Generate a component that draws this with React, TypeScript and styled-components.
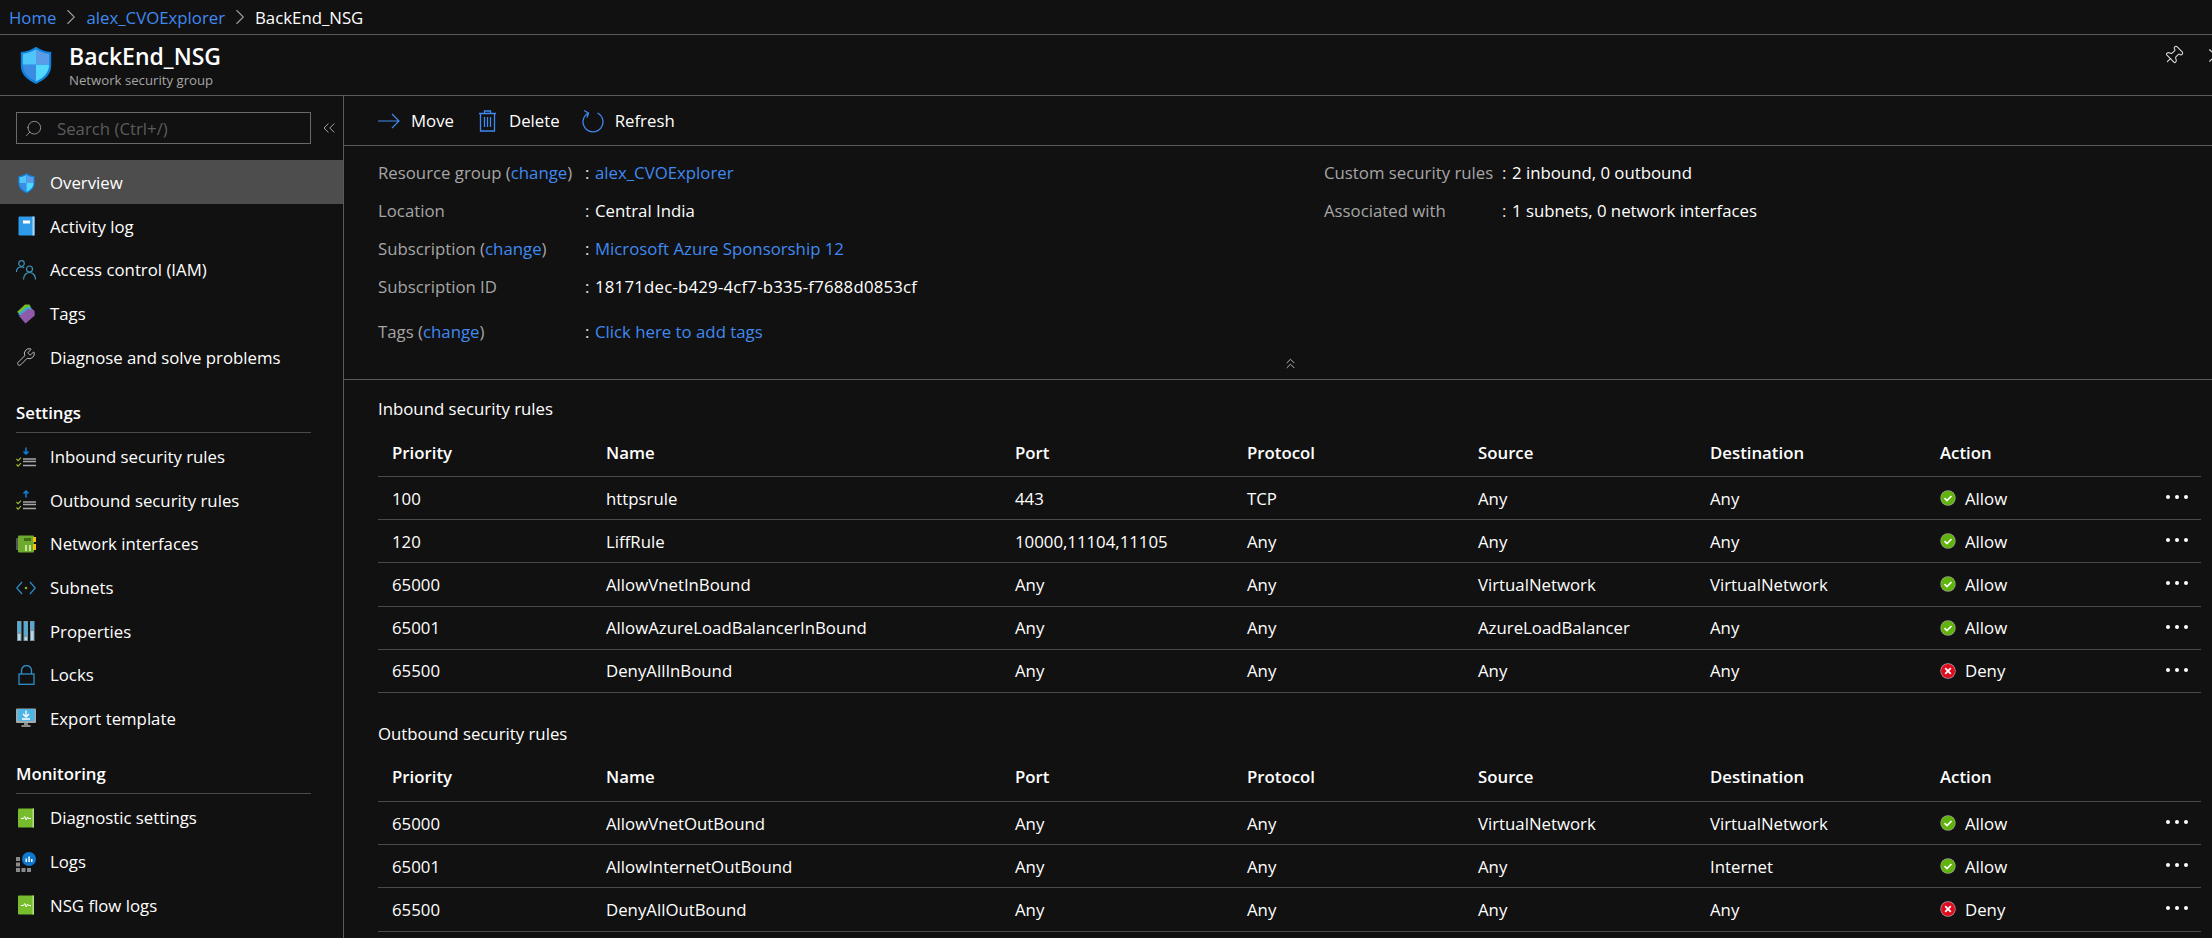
import React from 'react';
import styled, { createGlobalStyle } from 'styled-components';
import { ChevronsLeft, ChevronsUp, ChevronRight, Pin, Search, Wrench, X } from 'lucide-react';

type NavIconName =
  | 'shield' | 'log' | 'iam' | 'tags' | 'wrench' | 'inbound' | 'outbound' | 'nic'
  | 'subnet' | 'props' | 'lock' | 'export' | 'diag' | 'logs';

type NavEntry = { label: string; icon: NavIconName };
type Rule = { priority: string; name: string; port: string; protocol: string; source: string; destination: string; action: 'Allow' | 'Deny' };

const mainNav: NavEntry[] = [
  { label: 'Overview', icon: 'shield' },
  { label: 'Activity log', icon: 'log' },
  { label: 'Access control (IAM)', icon: 'iam' },
  { label: 'Tags', icon: 'tags' },
  { label: 'Diagnose and solve problems', icon: 'wrench' },
];

const settingsNav: NavEntry[] = [
  { label: 'Inbound security rules', icon: 'inbound' },
  { label: 'Outbound security rules', icon: 'outbound' },
  { label: 'Network interfaces', icon: 'nic' },
  { label: 'Subnets', icon: 'subnet' },
  { label: 'Properties', icon: 'props' },
  { label: 'Locks', icon: 'lock' },
  { label: 'Export template', icon: 'export' },
];

const monitoringNav: NavEntry[] = [
  { label: 'Diagnostic settings', icon: 'diag' },
  { label: 'Logs', icon: 'logs' },
  { label: 'NSG flow logs', icon: 'diag' },
];

const inboundRules: Rule[] = [
  { priority: '100', name: 'httpsrule', port: '443', protocol: 'TCP', source: 'Any', destination: 'Any', action: 'Allow' },
  { priority: '120', name: 'LiffRule', port: '10000,11104,11105', protocol: 'Any', source: 'Any', destination: 'Any', action: 'Allow' },
  { priority: '65000', name: 'AllowVnetInBound', port: 'Any', protocol: 'Any', source: 'VirtualNetwork', destination: 'VirtualNetwork', action: 'Allow' },
  { priority: '65001', name: 'AllowAzureLoadBalancerInBound', port: 'Any', protocol: 'Any', source: 'AzureLoadBalancer', destination: 'Any', action: 'Allow' },
  { priority: '65500', name: 'DenyAllInBound', port: 'Any', protocol: 'Any', source: 'Any', destination: 'Any', action: 'Deny' },
];

const outboundRules: Rule[] = [
  { priority: '65000', name: 'AllowVnetOutBound', port: 'Any', protocol: 'Any', source: 'VirtualNetwork', destination: 'VirtualNetwork', action: 'Allow' },
  { priority: '65001', name: 'AllowInternetOutBound', port: 'Any', protocol: 'Any', source: 'Any', destination: 'Internet', action: 'Allow' },
  { priority: '65500', name: 'DenyAllOutBound', port: 'Any', protocol: 'Any', source: 'Any', destination: 'Any', action: 'Deny' },
];

const ShieldIcon: React.FC<{ size: number }> = ({ size }) => (
  <svg width={size} height={size * 1.2} viewBox="0 0 32 38">
    <path d="M16 .5C12 3.500 6 5.500 .8 5.800V19c0 9 6 14.500 15.200 18.800C25.200 33.500 31.200 28 31.200 19V5.800C26 5.500 20 3.500 16 .5z" fill="#1180dc" />
    <path d="M16 3C12 5.500 7 7.300 2.800 7.600V18.500H16z" fill="#4fc6fb" />
    <path d="M16 3C20 5.500 25 7.300 29.200 7.600V18.500H16z" fill="#5a9ce8" />
    <path d="M2.800 18.500C3 26.500 8.500 31.500 16 35.300V18.500z" fill="#3a8de2" />
    <path d="M29.200 18.500C29 26.500 23.500 31.500 16 35.300V18.500z" fill="#52d8ff" />
  </svg>
);

const RulesIcon: React.FC<{ up?: boolean }> = ({ up }) => (
  <svg width="20" height="20" viewBox="0 0 20 20" fill="none">
    <path d={up ? 'M10 7.500V1M7.500 3.500 10 1l2.500 2.500' : 'M10 .5v6.500M7.500 4.500 10 7l2.500-2.500'} stroke="#0f7fd8" strokeWidth="1.500" />
    <path d="M.5 12l1.600 1.600 2.900-3M.5 17.500l1.600 1.600 2.900-3" stroke="#9cc02c" strokeWidth="1.100" />
    <path d="M7 12h13M7 14.500h13M7 18.500h13" stroke="#a6a6a6" strokeWidth="1.400" />
  </svg>
);

const BookIcon: React.FC = () => (
  <svg width="18" height="20" viewBox="0 0 18 20">
    <rect x="1" y="0.500" width="16" height="19" rx="1" fill="#76bc2d" />
    <path d="M15.500.5H17V19.500H15.500z" fill="#b9dc8a" />
    <path d="M4 10.500h2.500l1.200-2 1.500 3.500 1.300-3 1 1.500H14" stroke="#fff" strokeWidth="1" fill="none" />
  </svg>
);

const NavIcon: React.FC<{ name: NavIconName }> = ({ name }) => {
  switch (name) {
    case 'shield':
      return <ShieldIcon size={17} />;
    case 'log':
      return (
        <svg width="17" height="20" viewBox="0 0 17 20">
          <rect x="0.500" y="0.500" width="16" height="19" rx="1" fill="#2f9be8" />
          <path d="M14.500.5H16.500V19.500H14.500z" fill="#a8d8f5" />
          <rect x="5" y="4.500" width="7" height="3" fill="#fff" />
        </svg>
      );
    case 'iam':
      return (
        <svg width="20" height="20" viewBox="0 0 20 20" fill="none" stroke="#3d93b8" strokeWidth="1.200">
          <circle cx="5.500" cy="3.500" r="2.800" />
          <path d="M.5 12c0-3 2-5 5-5 1 0 2 .3 2.800 1" />
          <circle cx="13.500" cy="9" r="3" />
          <path d="M7.500 19.500c0-4 2.500-7 6-7s6 3 6 7" />
        </svg>
      );
    case 'tags':
      return (
        <svg width="20" height="20" viewBox="0 0 20 20">
          <path d="M1 8 9 .5h4.500l1.500 3L7 12z" fill="#76bc2d" />
          <path d="M2 10l9-7 4 .5 2 3L8 15z" fill="#3aa6e0" />
          <path d="M3 12 12 5l5 .5 1.500 1.500.3 4.500L9.500 19.500z" fill="#8f5ba8" />
        </svg>
      );
    case 'wrench':
      return <Wrench size={24} strokeWidth={1} color="#e0e0e0" />;
    case 'inbound':
      return <RulesIcon />;
    case 'outbound':
      return <RulesIcon up />;
    case 'nic':
      return (
        <svg width="20" height="18" viewBox="0 0 20 18">
          <rect x="0" y="3" width="3" height="12" fill="#555" />
          <rect x="2" y="0.500" width="16" height="17" rx="1" fill="#6cab2c" />
          <rect x="17" y="2" width="3" height="5" fill="#f2c111" />
          <rect x="17" y="9" width="3" height="6" fill="#f2c111" />
          <rect x="8" y="3" width="7" height="3" fill="#3f6b1a" />
          <path d="M9 10h2v6H9zM13 10h2v6h-2z" fill="#c8e4a0" />
        </svg>
      );
    case 'subnet':
      return (
        <svg width="20" height="14" viewBox="0 0 20 14" fill="none">
          <path d="M6 1 .8 7 6 13M14 1l5.200 6L14 13" stroke="#2f8fc8" strokeWidth="1.200" />
          <circle cx="10" cy="7" r="1.300" fill="#76bc2d" />
        </svg>
      );
    case 'props':
      return (
        <svg width="18" height="20" viewBox="0 0 18 20">
          <path d="M0 0h4.500v20H0zM6.500 0H11v20H6.500zM13 0h4.500v20H13z" fill="#7f96a3" />
          <path d="M1 1h2.500v10H1zM7.500 1H10v13H7.500zM14 1h2.500v7H14z" fill="#45b0e6" />
          <path d="M1 13h2.500v6H1zM7.500 16H10v3H7.500zM14 10h2.500v9H14z" fill="#b5d8ea" />
        </svg>
      );
    case 'lock':
      return (
        <svg width="17" height="20" viewBox="0 0 17 20" fill="none" stroke="#2f8fc8" strokeWidth="1.300">
          <rect x="1" y="9" width="15" height="10.300" />
          <path d="M3.500 9V5.500a5 5 0 0 1 10 0V9" />
        </svg>
      );
    case 'export':
      return (
        <svg width="20" height="20" viewBox="0 0 20 20">
          <rect x="0" y="0.500" width="20" height="14.500" rx="1" fill="#a8a8a8" />
          <rect x="1.500" y="1" width="17" height="12" fill="#4fb5e4" />
          <path d="M10 2.500v6M7 6l3 3 3-3M6 11h8" stroke="#fff" strokeWidth="1.300" fill="none" />
          <path d="M8 15h4v2H8zM5.500 17h9v2h-9z" fill="#8a8a8a" />
        </svg>
      );
    case 'diag':
      return <BookIcon />;
    case 'logs':
      return (
        <svg width="20" height="20" viewBox="0 0 20 20">
          <path d="M0 5h4v4H0zM0 10.500h4v4H0zM0 16h4v4H0zM5.500 16h4v4h-4zM11 16h4v4h-4z" fill="#8a8a8a" />
          <circle cx="13" cy="7" r="7" fill="#0f78d0" />
          <path d="M9.500 6.500h1.500v3.500H9.500zM12.300 4.500h1.500v5.500h-1.500zM15 7h1.500v3H15z" fill="#fff" />
        </svg>
      );
  }
};

const StatusIcon: React.FC<{ action: Rule['action'] }> = ({ action }) => (
  <svg width="16" height="16" viewBox="0 0 16 16">
    <circle cx="8" cy="8" r="7.700" fill={action === 'Allow' ? '#9aa58a' : '#b9a0a6'} />
    <circle cx="8" cy="8" r="7" fill={action === 'Allow' ? '#5fb30a' : '#e00b1c'} />
    {action === 'Allow' ? (
      <path d="M4.500 8.200 7 10.600l4.500-4.600" stroke="#fff" strokeWidth="1.700" fill="none" />
    ) : (
      <path d="M5.200 5.200l5.600 5.600M10.800 5.200l-5.600 5.600" stroke="#fff" strokeWidth="1.800" fill="none" />
    )}
  </svg>
);

const RulesTable: React.FC<{ title: string; rules: Rule[] }> = ({ title, rules }) => (
  <TableSection>
    <SectionTitle>{title}</SectionTitle>
    <HeadRow>
      <span>Priority</span>
      <span>Name</span>
      <span>Port</span>
      <span>Protocol</span>
      <span>Source</span>
      <span>Destination</span>
      <span>Action</span>
    </HeadRow>
    {rules.map(rule => (
      <RuleRow key={rule.priority + rule.name}>
        <span>{rule.priority}</span>
        <span>{rule.name}</span>
        <span>{rule.port}</span>
        <span>{rule.protocol}</span>
        <span>{rule.source}</span>
        <span>{rule.destination}</span>
        <ActionCell>
          <StatusIcon action={rule.action} />
          <span>{rule.action}</span>
          <MoreDots>
            <i />
            <i />
            <i />
          </MoreDots>
        </ActionCell>
      </RuleRow>
    ))}
  </TableSection>
);

const NavGroup: React.FC<{ items: NavEntry[] }> = ({ items }) => (
  <>
    {items.map(item => (
      <NavItem key={item.label} $active={item.label === 'Overview'}>
        <NavIconSlot>
          <NavIcon name={item.icon} />
        </NavIconSlot>
        {item.label}
      </NavItem>
    ))}
  </>
);

const App: React.FC = () => (
  <Page>
    <GlobalStyle />
    <Breadcrumb>
      <CrumbLink>Home</CrumbLink>
      <CrumbSep><ChevronRight size={26} strokeWidth={1} /></CrumbSep>
      <CrumbLink>alex_CVOExplorer</CrumbLink>
      <CrumbSep><ChevronRight size={26} strokeWidth={1} /></CrumbSep>
      <span>BackEnd_NSG</span>
    </Breadcrumb>
    <ResourceHeader>
      <ShieldIcon size={32} />
      <TitleBlock>
        <ResourceTitle>BackEnd_NSG</ResourceTitle>
        <ResourceType>Network security group</ResourceType>
      </TitleBlock>
      <HeaderActions>
        <PinGlyph size={21} strokeWidth={1.200} />
        <X size={23} strokeWidth={1.200} />
      </HeaderActions>
    </ResourceHeader>
    <Body>
      <Sidebar>
        <SearchRow>
          <SearchBox>
            <FlipSearch size={19} strokeWidth={1.100} />
            <span>Search (Ctrl+/)</span>
          </SearchBox>
          <ChevronsLeft size={20} strokeWidth={1} color="#bdbdbd" />
        </SearchRow>
        <NavGroup items={mainNav} />
        <NavHeading>Settings</NavHeading>
        <NavGroup items={settingsNav} />
        <NavHeading>Monitoring</NavHeading>
        <NavGroup items={monitoringNav} />
      </Sidebar>
      <Main>
        <Toolbar>
          <ToolButton $gap={11}>
            <svg width="22" height="16" viewBox="0 0 22 16" fill="none" stroke="#4089f0" strokeWidth="1.200">
              <path d="M0 8h21M14 1l7 7-7 7" />
            </svg>
            Move
          </ToolButton>
          <ToolButton $gap={13}>
            <svg width="17" height="22" viewBox="0 0 17 22" fill="none" stroke="#4089f0" strokeWidth="1.300">
              <path d="M0 3.500h17M5.500 3.500V1h6v2.500M1.500 3.500V21h14V3.500M5.500 7v10M8.500 7v10M11.500 7v10" />
            </svg>
            Delete
          </ToolButton>
          <RefreshButton $gap={11}>
            <svg width="22" height="24" viewBox="0 0 22 24" fill="none" stroke="#4089f0" strokeWidth="1.300">
              <path d="M15.500 4A10 10 0 1 1 6.500 4M2 1.500 6.500 4 5 8.500" />
            </svg>
            Refresh
          </RefreshButton>
        </Toolbar>
        <Essentials>
          <EssentialsGrid>
            <EssentialsColumn>
              <InfoRow>
                <InfoLabel>Resource group (<LinkText>change</LinkText>)</InfoLabel>
                <Colon>:</Colon>
                <LinkText>alex_CVOExplorer</LinkText>
              </InfoRow>
              <InfoRow>
                <InfoLabel>Location</InfoLabel>
                <Colon>:</Colon>
                <span>Central India</span>
              </InfoRow>
              <InfoRow>
                <InfoLabel>Subscription (<LinkText>change</LinkText>)</InfoLabel>
                <Colon>:</Colon>
                <LinkText>Microsoft Azure Sponsorship 12</LinkText>
              </InfoRow>
              <InfoRow>
                <InfoLabel>Subscription ID</InfoLabel>
                <Colon>:</Colon>
                <IdText>18171dec-b429-4cf7-b335-f7688d0853cf</IdText>
              </InfoRow>
              <TagsRow>
                <InfoLabel>Tags (<LinkText>change</LinkText>)</InfoLabel>
                <Colon>:</Colon>
                <LinkText>Click here to add tags</LinkText>
              </TagsRow>
            </EssentialsColumn>
            <EssentialsColumn>
              <InfoRow>
                <WideLabel>Custom security rules</WideLabel>
                <Colon>:</Colon>
                <span>2 inbound, 0 outbound</span>
              </InfoRow>
              <InfoRow>
                <WideLabel>Associated with</WideLabel>
                <Colon>:</Colon>
                <span>1 subnets, 0 network interfaces</span>
              </InfoRow>
            </EssentialsColumn>
          </EssentialsGrid>
          <CollapseRow>
            <ChevronsUp size={17} strokeWidth={1.200} />
          </CollapseRow>
        </Essentials>
        <RulesTable title="Inbound security rules" rules={inboundRules} />
        <RulesTable title="Outbound security rules" rules={outboundRules} />
      </Main>
    </Body>
  </Page>
);

const GlobalStyle = createGlobalStyle`
  html, body {
    margin: 0;
    height: 100%;
    overflow: hidden;
    background: #111111;
  }
`;

const Page = styled.div`
  width: 2212px;
  height: 938px;
  overflow: hidden;
  background: #111111;
  color: #ffffff;
  font-family: "Open Sans", "Noto Sans", "Liberation Sans", sans-serif;
  font-size: 16.8px;
`;

const Breadcrumb = styled.nav`
  display: flex;
  align-items: center;
  height: 34px;
  padding-left: 9px;
  border-bottom: 1px solid #5a5a5a;
`;

const CrumbLink = styled.span`
  color: #4089f0;
`;

const CrumbSep = styled.span`
  display: flex;
  margin: 0 2px;
  color: #9a9a9a;
`;

const ResourceHeader = styled.header`
  display: flex;
  align-items: center;
  height: 60px;
  padding-left: 20px;
  border-bottom: 1px solid #5a5a5a;
`;

const TitleBlock = styled.div`
  display: flex;
  flex-direction: column;
  margin-left: 17px;
`;

const ResourceTitle = styled.div`
  font-size: 23px;
  font-weight: 600;
  line-height: 31px;
`;

const ResourceType = styled.div`
  font-size: 13.200px;
  line-height: 17px;
  color: #a6a6a6;
`;

const HeaderActions = styled.div`
  display: flex;
  align-items: center;
  gap: 20px;
  margin-left: auto;
  margin-right: -15px;
  margin-top: -19px;
  color: #dedede;
`;

const PinGlyph = styled(Pin)`
  transform: rotate(45deg);
`;

const Body = styled.div`
  display: flex;
  height: 843px;
`;

const Sidebar = styled.aside`
  flex: 0 0 343px;
  border-right: 1px solid #5a5a5a;
`;

const SearchRow = styled.div`
  display: flex;
  align-items: center;
  gap: 8px;
  height: 64px;
  padding-left: 16px;
  box-sizing: border-box;
  color: #bdbdbd;
`;

const SearchBox = styled.div`
  display: flex;
  align-items: center;
  gap: 14px;
  width: 295px;
  height: 32px;
  padding-left: 7px;
  box-sizing: border-box;
  border: 1px solid #6a6a6a;
  color: #5c5c5c;
`;

const FlipSearch = styled(Search)`
  transform: scaleX(-1);
  color: #a0a0a0;
`;

const NavItem = styled.div<{ $active?: boolean }>`
  display: flex;
  align-items: center;
  height: 43.600px;
  padding: 2px 0 0 16px;
  box-sizing: border-box;
  background: ${p => (p.$active ? '#4d4d4d' : 'transparent')};
`;

const NavIconSlot = styled.span`
  display: flex;
  justify-content: center;
  align-items: center;
  width: 20px;
  margin-right: 14px;
`;

const NavHeading = styled.div`
  display: flex;
  align-items: flex-end;
  height: 55px;
  margin: 0 32px 1px 16px;
  padding-bottom: 8px;
  box-sizing: border-box;
  border-bottom: 1px solid #4a4a4a;
  font-weight: 600;
`;

const Main = styled.main`
  flex: 1;
  min-width: 0;
`;

const Toolbar = styled.div`
  display: flex;
  align-items: center;
  gap: 25px;
  height: 49px;
  padding-left: 34px;
  border-bottom: 1px solid #5a5a5a;
`;

const ToolButton = styled.div<{ $gap: number }>`
  display: flex;
  align-items: center;
  gap: ${p => p.$gap}px;
`;

const RefreshButton = styled(ToolButton)`
  margin-left: -3px;
`;

const Essentials = styled.section`
  height: 234px;
  padding-top: 7px;
  box-sizing: border-box;
  border-bottom: 1px solid #5a5a5a;
`;

const EssentialsGrid = styled.div`
  display: grid;
  grid-template-columns: 946px 1fr;
  height: 198px;
  padding-left: 34px;
`;

const EssentialsColumn = styled.div`
  display: flex;
  flex-direction: column;
`;

const InfoRow = styled.div`
  display: flex;
  align-items: center;
  height: 38px;
`;

const TagsRow = styled(InfoRow)`
  margin-top: 7px;
`;

const InfoLabel = styled.span`
  width: 207px;
  color: #a6a6a6;
`;

const WideLabel = styled(InfoLabel)`
  width: 178px;
`;

const Colon = styled.span`
  width: 10px;
  color: #e6e6e6;
`;

const IdText = styled.span`
  letter-spacing: 0.210px;
`;

const LinkText = styled.span`
  color: #4089f0;
`;

const CollapseRow = styled.div`
  display: flex;
  justify-content: center;
  margin: 4px 0 0 24px;
  color: #d0d0d0;
`;

const TableSection = styled.section`
  padding: 17px 11px 0 34px;
  & + & {
    padding-top: 29px;
  }
`;

const SectionTitle = styled.h2`
  margin: 0;
  font-size: 16.800px;
  font-weight: 400;
  line-height: 24px;
`;

const columns = '214px 409px 232px 231px 232px 230px 1fr';

const HeadRow = styled.div`
  display: grid;
  grid-template-columns: ${columns};
  align-items: center;
  height: 56px;
  padding: 7px 0 0 14px;
  box-sizing: border-box;
  border-bottom: 1px solid #4a4a4a;
  font-weight: 600;
`;

const RuleRow = styled.div`
  display: grid;
  grid-template-columns: ${columns};
  align-items: center;
  height: 43.200px;
  padding-left: 14px;
  box-sizing: border-box;
  border-bottom: 1px solid #4a4a4a;
`;

const ActionCell = styled.div`
  display: flex;
  align-items: center;
  gap: 9px;
`;

const MoreDots = styled.span`
  display: flex;
  gap: 5px;
  margin-left: auto;
  margin-right: 13px;
  margin-top: -2px;
  & > i {
    width: 4px;
    height: 4px;
    border-radius: 50%;
    background: #ffffff;
  }
`;

export default App;
